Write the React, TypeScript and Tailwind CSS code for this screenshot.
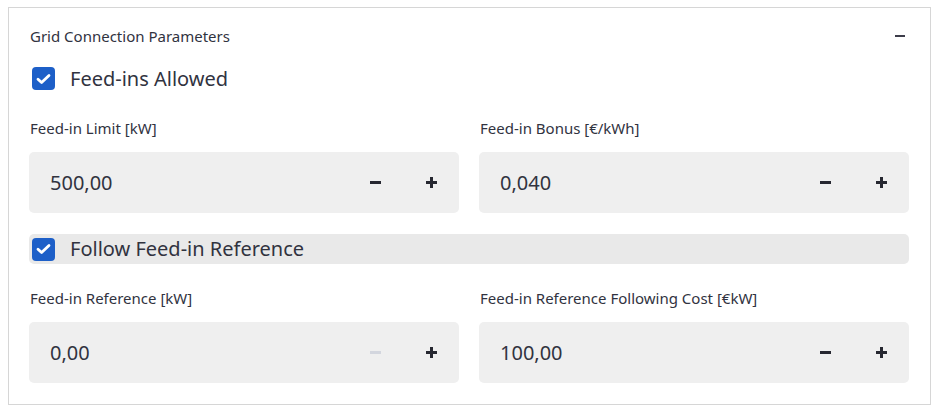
import React from "react";

function Check() {
  return (
    <div className="w-[23px] h-[23px] rounded-[4px] bg-[#1d5fc8] flex items-center justify-center shrink-0">
      <svg width="15" height="12" viewBox="0 0 15 12" fill="none">
        <path d="M2 6.2 L5.6 9.6 L13 2.4" stroke="white" strokeWidth="2.8" strokeLinecap="round" strokeLinejoin="round" />
      </svg>
    </div>
  );
}

function NumberInput({ label, value, minusDisabled }: { label: string; value: string; minusDisabled?: boolean }) {
  return (
    <div className="flex flex-col">
      <div className="h-[24px] flex items-center text-[15px] text-[#31333f] pl-[1px]">{label}</div>
      <div className="mt-[12px] h-[61px] rounded-[5px] bg-[#efefef] flex items-center">
        <div className="flex-1 pl-[21px] text-[20px] text-[#31333f]">{value}</div>
        <div className="w-[56px] h-full flex items-center justify-center">
          <div className={"w-[11px] h-[3px] " + (minusDisabled ? "bg-[#d3d6de]" : "bg-[#262730]")} />
        </div>
        <div className="w-[56px] h-full flex items-center justify-center">
          <svg width="11" height="11" viewBox="0 0 11 11">
            <rect x="0" y="4" width="11" height="3" fill="#262730" />
            <rect x="4" y="0" width="3" height="11" fill="#262730" />
          </svg>
        </div>
      </div>
    </div>
  );
}

export default function App() {
  return (
    <div className="pl-[8px] pt-[7px] bg-white w-[938px] h-[412px]" style={{ fontFamily: '"Noto Sans", "Open Sans", sans-serif' }}>
      <div className="w-[923px] h-[398px] border border-[#d6d6d6] pl-[20px] pr-[21px]">
        <div className="h-[56px] flex items-center justify-between pr-[4px]">
          <div className="text-[15px] text-[#31333f] pl-[1px]">Grid Connection Parameters</div>
          <div className="w-[10px] h-[2px] bg-[#3d3d4a]" />
        </div>
        <div className="h-[29px] flex items-center gap-[15px] pl-[3px]">
          <Check />
          <span className="text-[20px] text-[#31333f]">Feed-ins Allowed</span>
        </div>
        <div className="mt-[23px] grid grid-cols-2 gap-[20px]">
          <NumberInput label="Feed-in Limit [kW]" value="500,00" />
          <NumberInput label="Feed-in Bonus [€/kWh]" value="0,040" />
        </div>
        <div className="mt-[21px] h-[30px] rounded-[5px] bg-[#e9e9e9] flex items-center gap-[15px] pl-[3px]">
          <Check />
          <span className="text-[20px] text-[#31333f]">Follow Feed-in Reference</span>
        </div>
        <div className="mt-[22px] grid grid-cols-2 gap-[20px]">
          <NumberInput label="Feed-in Reference [kW]" value="0,00" minusDisabled />
          <NumberInput label="Feed-in Reference Following Cost [€kW]" value="100,00" />
        </div>
      </div>
    </div>
  );
}
